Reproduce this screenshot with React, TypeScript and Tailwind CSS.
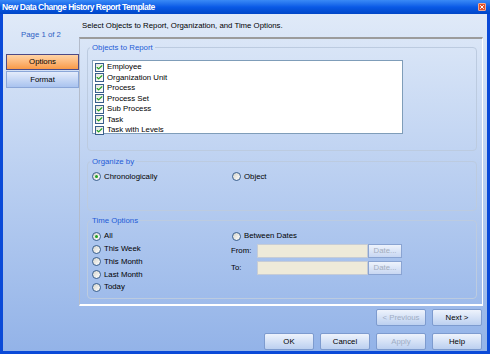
import { Check, X } from "lucide-react";

const objects = [
  "Employee",
  "Organization Unit",
  "Process",
  "Process Set",
  "Sub Process",
  "Task",
  "Task with Levels",
];

const timeOptions = ["All", "This Week", "This Month", "Last Month", "Today"];

const Radio = ({ on = false }: { on?: boolean }) => (
  <span className="flex h-[9px] w-[9px] shrink-0 items-center justify-center rounded-full border border-[#3a5f8c] bg-gradient-to-br from-[#d4d4cc] to-[#ffffff]">
    {on && <span className="h-[3px] w-[3px] rounded-full bg-[#21a121]" />}
  </span>
);

const Btn = ({ label, disabled = false }: { label: string; disabled?: boolean }) => (
  <button
    className={`h-[17px] w-[50px] rounded-[2px] border border-[#7d9bcf] bg-gradient-to-b from-[#eef3fc] to-[#bcd0f0] text-[7.8px] leading-none ${
      disabled ? "text-[#9fadc4]" : "text-black"
    }`}
  >
    {label}
  </button>
);

export default function App() {
  return (
    <div className="flex h-[354px] w-[490px] flex-col bg-[#0a4ad8] font-['Liberation_Sans',Arial,sans-serif] text-[7.8px] text-black">
      {/* Title bar */}
      <div className="flex h-[14px] items-center justify-between bg-gradient-to-b from-[#3a8af6] via-[#0a5ae6] to-[#0046c8] pl-[2px] pr-[4px]">
        <span className="text-[8.5px] font-bold leading-none tracking-[-0.5px] text-white">
          New Data Change History Report Template
        </span>
        <span className="flex h-[8px] w-[8px] items-center justify-center rounded-[1px] border border-[#f0a890] bg-[#e0502a]">
          <X size={6} strokeWidth={4} className="text-white" />
        </span>
      </div>

      <div className="mx-[3px] mb-[3px] flex flex-1 bg-gradient-to-b from-[#e0eaf8] to-[#93b3e8]">
        {/* Left pane */}
        <div className="flex w-[76px] flex-col">
          <div className="mt-[15px] h-[11px] text-center leading-[11px] text-[#2f61c4]">Page 1 of 2</div>
          <div className="ml-[3px] mt-[14px] flex h-[16px] w-[73px] items-center justify-center border border-[#4d4a86] bg-gradient-to-b from-[#ffd4a6] to-[#f99a46]">
            Options
          </div>
          <div className="ml-[3px] mt-[1px] flex h-[17px] w-[73px] items-center justify-center border border-[#8aa6d8] bg-gradient-to-b from-[#e4ecfb] to-[#a9c3ef]">
            Format
          </div>
        </div>

        {/* Right pane */}
        <div className="flex flex-1 flex-col">
          <div className="mt-[6px] h-[11px] pl-[3px] leading-[11px]">
            Select Objects to Report, Organization, and Time Options.
          </div>

          <div className="mr-[4px] mt-[6px] flex h-[269px] flex-col border-b-2 border-l border-r border-t-2 border-b-white border-l-[#b4bccb] border-r-white border-t-[#9c9c9c] pl-[7px] pr-[5px] pt-[3px]">
            {/* Objects to Report */}
            <fieldset className="h-[109px] rounded-[4px] border border-[#bccbe0]">
              <legend className="ml-[2px] px-[2px] leading-[11px] text-[#1f5bd6]">Objects to Report</legend>
              <div className="ml-[4px] mt-[7px] h-[74px] w-[311px] border border-[#7f9db9] bg-white pt-[1px]">
                {objects.map((o) => (
                  <div key={o} className="flex h-[10.5px] items-center gap-[3px] pl-[2px]">
                    <span className="flex h-[9px] w-[9px] items-center justify-center border border-[#3a5f8c] bg-gradient-to-br from-[#e4e4dc] to-white">
                      <Check size={7} strokeWidth={4} className="text-[#21a121]" />
                    </span>
                    <span className="leading-none">{o}</span>
                  </div>
                ))}
              </div>
            </fieldset>

            {/* Organize by */}
            <fieldset className="mt-[5px] h-[55px] rounded-[4px] border border-[#bccbe0]">
              <legend className="ml-[2px] px-[2px] leading-[11px] text-[#1f5bd6]">Organize by</legend>
              <div className="ml-[4px] mt-[4px] flex h-[11px] items-center">
                <div className="flex w-[140px] items-center gap-[3px]">
                  <Radio on />
                  <span className="leading-none">Chronologically</span>
                </div>
                <div className="flex items-center gap-[3px]">
                  <Radio />
                  <span className="leading-none">Object</span>
                </div>
              </div>
            </fieldset>

            {/* Time Options */}
            <fieldset className="mt-[4px] h-[84px] rounded-[4px] border border-[#bccbe0]">
              <legend className="ml-[2px] px-[2px] leading-[11px] text-[#1f5bd6]">Time Options</legend>
              <div className="ml-[4px] mt-[4px] flex">
                <div className="flex w-[140px] flex-col">
                  {timeOptions.map((t, i) => (
                    <div key={t} className="flex h-[12.75px] items-center gap-[3px]">
                      <Radio on={i === 0} />
                      <span className="leading-none">{t}</span>
                    </div>
                  ))}
                </div>
                <div className="flex flex-col">
                  <div className="flex h-[12px] items-center gap-[3px]">
                    <Radio />
                    <span className="leading-none">Between Dates</span>
                  </div>
                  {["From:", "To:"].map((l, i) => (
                    <div key={l} className={`-ml-[1px] flex h-[14px] items-center ${i === 0 ? "mt-[2px]" : "mt-[3px]"}`}>
                      <span className="w-[26px] leading-none">{l}</span>
                      <div className="h-[14px] w-[111px] border border-[#c6ccd6] bg-[#eeead9]" />
                      <div className="flex h-[14px] w-[34px] items-center justify-center border border-[#8aa4d2] bg-gradient-to-b from-[#eef3fc] to-[#c8d7f2] leading-none text-[#a3adbd]">
                        Date...
                      </div>
                    </div>
                  ))}
                </div>
              </div>
            </fieldset>
          </div>

          <div className="mt-[3px] flex justify-end gap-[6px] pr-[5px]">
            <Btn label="< Previous" disabled />
            <Btn label="Next >" />
          </div>
          <div className="mt-[7px] flex justify-end gap-[6px] pr-[5px]">
            <Btn label="OK" />
            <Btn label="Cancel" />
            <Btn label="Apply" disabled />
            <Btn label="Help" />
          </div>
        </div>
      </div>
    </div>
  );
}
